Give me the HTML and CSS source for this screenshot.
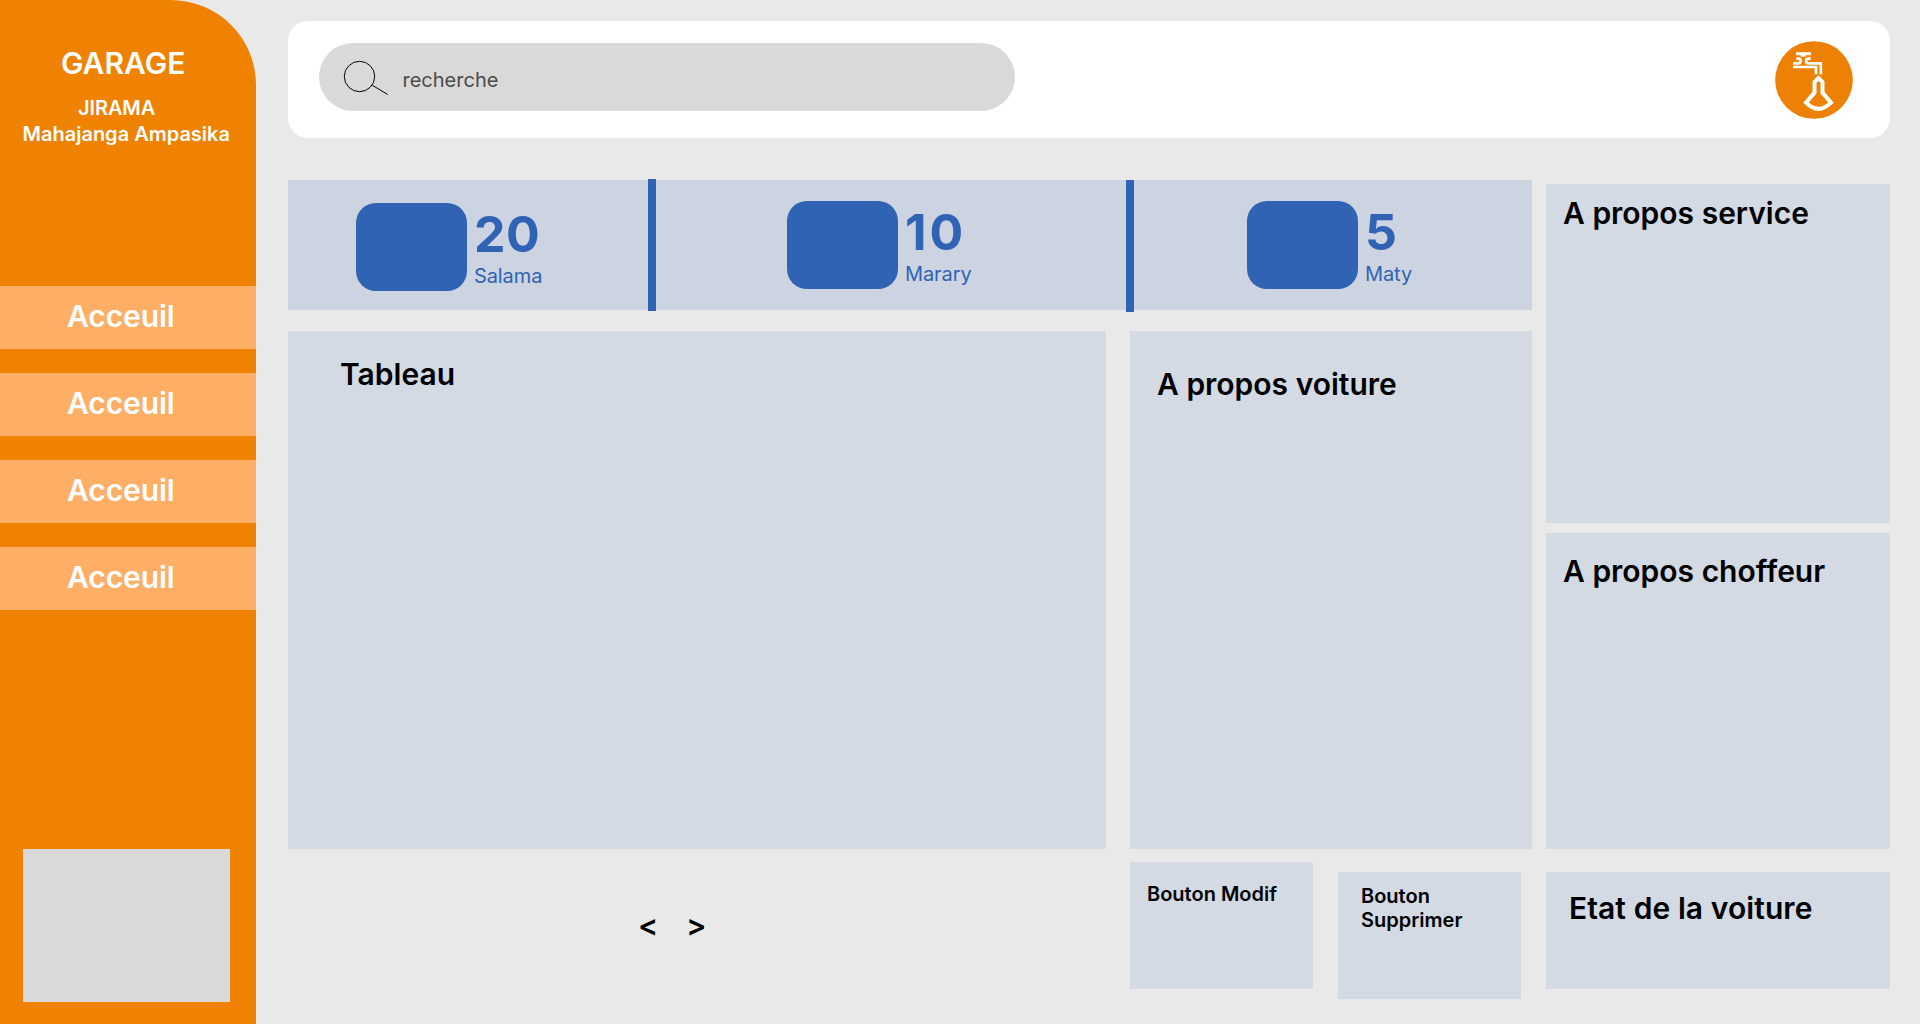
FILE: index.html
```html
<!DOCTYPE html>
<html lang="fr">
<head>
<meta charset="utf-8">
<title>Garage JIRAMA</title>
<link rel="stylesheet" href="styles.css">
</head>
<body>
<div class="app">
  <aside class="sidebar">
    <h1 class="brand">GARAGE</h1>
    <p class="company">JIRAMA</p>
    <p class="city">Mahajanga Ampasika</p>
    <nav class="menu">
      <a class="menu-item">Acceuil</a>
      <a class="menu-item">Acceuil</a>
      <a class="menu-item">Acceuil</a>
      <a class="menu-item">Acceuil</a>
    </nav>
    <div class="sidebar-box"></div>
  </aside>
  <main class="main">
    <header class="topbar">
      <div class="search">
        <svg class="search-icon" width="46" height="34" viewBox="0 0 46 34" fill="none" stroke="#000"><circle cx="16.5" cy="16.5" r="15.2"/><path d="M29.2 25.2 44.7 34.5"/></svg>
        <span class="search-text">recherche</span>
      </div>
      <svg class="logo" width="78" height="78" viewBox="45 32 234 234">
        <circle cx="162" cy="149" r="116.5" fill="#ec8106"/>
        <g fill="none" stroke="#fff">
          <path stroke-width="9" d="M108 70H153"/>
          <path stroke-width="6" d="M122 76H138"/>
          <path stroke-width="8" d="M109 85H117Q122 86 122 91Q122 98 115 99H99M152 85H144Q138 86 138 91Q138 98 145 99H182.500V132"/>
          <path stroke-width="8" d="M99 110H168V132"/>
          <path stroke-width="12" d="M175.500 143 163.500 155V187L138 217Q175 254 213 217L187.500 187V155Z"/>
        </g>
      </svg>
    </header>
    <div class="board">
      <div class="left">
        <section class="stats">
          <div class="stat stat-ok"><i class="badge"></i><div class="stat-text"><b class="count">20</b><span class="label">Salama</span></div></div>
          <i class="divider divider-first"></i>
          <div class="stat stat-sick"><i class="badge"></i><div class="stat-text"><b class="count">10</b><span class="label">Marary</span></div></div>
          <i class="divider divider-second"></i>
          <div class="stat stat-dead"><i class="badge"></i><div class="stat-text"><b class="count">5</b><span class="label">Maty</span></div></div>
        </section>
        <div class="columns">
          <div class="table-column">
            <section class="panel table-panel"><h2>Tableau</h2></section>
            <div class="pager"><span>&lt;</span><span>&gt;</span></div>
          </div>
          <div class="car-column">
            <section class="panel car-panel"><h2>A propos voiture</h2></section>
            <div class="actions">
              <div class="action edit">Bouton Modif</div>
              <div class="action delete">Bouton Supprimer</div>
            </div>
          </div>
        </div>
      </div>
      <div class="right">
        <section class="panel service-panel"><h2>A propos service</h2></section>
        <section class="panel driver-panel"><h2>A propos choffeur</h2></section>
        <section class="panel state-panel"><h2>Etat de la voiture</h2></section>
      </div>
    </div>
  </main>
</div>
</body>
</html>
```
FILE: styles.css
```css
* { box-sizing: border-box; }
body {
  margin: 0;
  background: #e9e9e9;
  color: #000;
  font-family: Inter, "Liberation Sans", sans-serif;
}
h1, h2, p { margin: 0; }
h2 { font-size: 30px; line-height: 36px; font-weight: 600; white-space: nowrap; }
.app { display: flex; width: 1920px; height: 1024px; overflow: hidden; }

.sidebar {
  display: flex;
  flex-direction: column;
  width: 256px;
  height: 1024px;
  padding: 45px 0 22px;
  border-top-right-radius: 85px;
  background: #ef8200;
  color: #fff;
  font-weight: 600;
}
.brand { padding-left: 61px; font-size: 30px; line-height: 36px; font-weight: 600; }
.company { margin-top: 15px; padding-left: 78px; font-size: 20px; line-height: 24px; letter-spacing: -0.1px; }
.city { margin-top: 2px; padding-left: 22.5px; font-size: 20px; line-height: 24px; white-space: nowrap; }
.menu { display: flex; flex-direction: column; gap: 24px; margin-top: 140px; }
.menu-item { height: 63px; padding: 12px 0 0 67px; background: #ffae65; font-size: 30px; line-height: 36px; letter-spacing: -0.1px; }
.sidebar-box { width: 207px; height: 153px; margin: auto 0 0 23px; background: #d9d9d9; }

.main { width: 1602px; margin: 21px 30px 0 32px; }
.topbar {
  display: flex;
  align-items: flex-start;
  justify-content: space-between;
  height: 117px;
  padding: 20px 37px 0 31px;
  border-radius: 20px;
  background: #fff;
}
.search { display: flex; width: 696px; height: 68px; margin-top: 2px; padding-left: 24px; border-radius: 34px; background: #d9d9d9; }
.search-icon { margin-top: 17px; overflow: visible; }
.search-text { margin: 25px 0 0 13.5px; color: #4b4b4b; font-size: 20px; line-height: 24px; }

.board { display: flex; gap: 14px; margin-top: 42px; }
.left { width: 1244px; }
.stats { display: flex; height: 130px; background: #ccd3e1; color: #3063b3; }
.stat { display: flex; gap: 7px; padding-top: 21px; }
.stat-ok { width: 359.5px; padding: 23px 0 0 68px; }
.stat-sick { width: 470.5px; padding-left: 131.5px; }
.stat-dead { flex: 1; padding-left: 113px; }
.badge { width: 111px; height: 88px; border-radius: 20px; background: #3063b3; }
.stat-text { display: flex; flex-direction: column; margin-top: 1px; }
.count { font-size: 50px; line-height: 60px; font-weight: 700; letter-spacing: 0.6px; }
.stat-sick .count { letter-spacing: 3px; }
.label { font-size: 20px; line-height: 24px; font-weight: 400; letter-spacing: -0.1px; }
.divider { width: 8px; height: 132px; background: #3063b3; }
.divider-first { margin-top: -1px; }

.columns { display: flex; gap: 24px; margin-top: 21px; }
.panel { background: #d3dae4; }
.table-column { width: 818px; }
.table-panel { height: 518px; padding: 25px 0 0 52px; }
.pager { display: flex; gap: 28px; margin-top: 58px; padding-left: 350px; font-size: 30px; line-height: 36px; font-weight: 600; }
.car-column { width: 402px; }
.car-panel { height: 518px; padding: 35px 0 0 27px; }
.actions { display: flex; gap: 25px; margin-top: 13px; }
.action { width: 183px; height: 127px; background: #d3dae4; font-size: 20px; line-height: 24px; font-weight: 600; }
.edit { padding: 20px 0 0 17px; }
.delete { margin-top: 10px; padding: 12px 40px 0 23px; }

.right { width: 344px; padding-top: 4px; }
.service-panel { height: 339px; padding: 11px 0 0 17px; }
.driver-panel { height: 316px; margin-top: 10px; padding: 20px 0 0 17px; }
.state-panel { height: 117px; margin-top: 23px; padding: 18px 0 0 23px; }
.state-panel h2 { letter-spacing: 0.08px; }
```
